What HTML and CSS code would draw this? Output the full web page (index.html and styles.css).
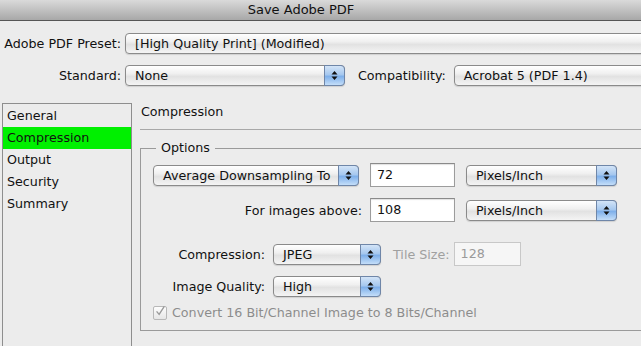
FILE: index.html
```html
<!DOCTYPE html>
<html lang="en">
<head>
    <meta charset="UTF-8">
    <title>Save Adobe PDF</title>
    <link rel="stylesheet" href="styles.css">
</head>
<body>

<div class="window">
    <!-- Barra de título -->
    <div class="titlebar">Save Adobe PDF</div>

    <!-- Preset y estándar -->
    <div class="top-row preset-row">
        <span class="top-label">Adobe PDF Preset:</span>
        <div class="popup popup-open">[High Quality Print] (Modified)</div>
    </div>
    <div class="top-row standard-row">
        <span class="top-label">Standard:</span>
        <div class="popup popup-standard">None<span class="stepper"><svg width="7" height="11" viewBox="0 0 7 11"><path d="M3.5 1 L6.5 4.5 L0.5 4.5 Z M3.5 10 L6.5 6.5 L0.5 6.5 Z" fill="#111"/></svg></span></div>
        <span class="compat-label">Compatibility:</span>
        <div class="popup popup-open">Acrobat 5 (PDF 1.4)</div>
    </div>

    <div class="main">
        <!-- Lista de secciones -->
        <ul class="sidebar">
            <li>General</li>
            <li class="selected">Compression</li>
            <li>Output</li>
            <li>Security</li>
            <li>Summary</li>
        </ul>

        <div class="panel">
            <div class="panel-title">Compression</div>

            <fieldset class="group">
                <legend>Options</legend>

                <div class="opt-row row-sampling">
                    <div class="popup popup-sampling">Average Downsampling To<span class="stepper"><svg width="7" height="11" viewBox="0 0 7 11"><path d="M3.5 1 L6.5 4.5 L0.5 4.5 Z M3.5 10 L6.5 6.5 L0.5 6.5 Z" fill="#111"/></svg></span></div>
                    <div class="field">72</div>
                    <div class="popup popup-unit">Pixels/Inch<span class="stepper"><svg width="7" height="11" viewBox="0 0 7 11"><path d="M3.5 1 L6.5 4.5 L0.5 4.5 Z M3.5 10 L6.5 6.5 L0.5 6.5 Z" fill="#111"/></svg></span></div>
                </div>

                <div class="opt-row row-above">
                    <span class="opt-label label-above">For images above:</span>
                    <div class="field">108</div>
                    <div class="popup popup-unit">Pixels/Inch<span class="stepper"><svg width="7" height="11" viewBox="0 0 7 11"><path d="M3.5 1 L6.5 4.5 L0.5 4.5 Z M3.5 10 L6.5 6.5 L0.5 6.5 Z" fill="#111"/></svg></span></div>
                </div>

                <div class="opt-row row-compression">
                    <span class="opt-label label-short">Compression:</span>
                    <div class="popup popup-small">JPEG<span class="stepper"><svg width="7" height="11" viewBox="0 0 7 11"><path d="M3.5 1 L6.5 4.5 L0.5 4.5 Z M3.5 10 L6.5 6.5 L0.5 6.5 Z" fill="#111"/></svg></span></div>
                    <span class="tile-label">Tile Size:</span>
                    <div class="field field-disabled">128</div>
                </div>

                <div class="opt-row row-quality">
                    <span class="opt-label label-short">Image Quality:</span>
                    <div class="popup popup-small">High<span class="stepper"><svg width="7" height="11" viewBox="0 0 7 11"><path d="M3.5 1 L6.5 4.5 L0.5 4.5 Z M3.5 10 L6.5 6.5 L0.5 6.5 Z" fill="#111"/></svg></span></div>
                </div>

                <div class="opt-row row-convert">
                    <span class="checkbox"><svg width="14" height="14" viewBox="0 0 14 14"><path d="M3 7.5 L6 11 L12 1.5" fill="none" stroke="#9a9a9a" stroke-width="1.6"/></svg></span>
                    <span class="convert-text">Convert 16 Bit/Channel Image to 8 Bits/Channel</span>
                </div>
            </fieldset>
        </div>
    </div>
</div>

</body>
</html>
```

FILE: styles.css
```css
* {
    margin: 0;
    padding: 0;
    box-sizing: border-box;
}
body {
    font-family: 'DejaVu Sans', sans-serif;
    font-size: 12.7px;
    color: #111;
    background-color: #ececec;
}
.window {
    width: 641px;
    height: 346px;
    overflow: hidden;
    background-color: #ececec;
}
.titlebar {
    height: 21px;
    line-height: 20px;
    text-align: center;
    padding-right: 39px;
    background: linear-gradient(#dadada, #a8a8a8);
    border-bottom: 1px solid #565656;
    font-size: 13px;
}
.top-row {
    display: flex;
    align-items: center;
    white-space: nowrap;
}
.top-row > * {
    flex-shrink: 0;
}
.preset-row {
    margin-top: 12px;
}
.standard-row {
    margin-top: 11px;
}
.top-label {
    width: 121px;
    text-align: right;
    margin-right: 4px;
}
.compat-label {
    margin-left: 13px;
    margin-right: 8px;
}
/* Menús emergentes estilo Aqua */
.popup {
    position: relative;
    height: 21px;
    line-height: 19px;
    padding-left: 9px;
    border: 1px solid #8a8a8a;
    border-radius: 4px;
    background: linear-gradient(#ffffff, #f0f0f0 40%, #e2e2e2 55%, #f4f4f4);
    box-shadow: 0 1px 1px rgba(0, 0, 0, 0.12);
    white-space: nowrap;
    flex-shrink: 0;
}
.popup-open {
    width: 560px;
}
.popup-standard {
    width: 220px;
}
.stepper {
    position: absolute;
    top: -1px;
    right: -1px;
    bottom: -1px;
    width: 21px;
    display: flex;
    align-items: center;
    justify-content: center;
    border: 1px solid #6f86a8;
    border-radius: 0 4px 4px 0;
    background: linear-gradient(#d3e4f7, #a6c8ef 45%, #7fb0ea 55%, #c4def9);
}
.main {
    display: flex;
    margin-top: 17px;
    height: 260px;
}
.sidebar {
    list-style: none;
    width: 130px;
    margin-left: 2px;
    padding-top: 1px;
    border: 1px solid #8e8e8e;
    border-bottom: none;
    flex-shrink: 0;
}
.sidebar li {
    height: 22px;
    line-height: 22px;
    padding-left: 4px;
}
.sidebar .selected {
    background-color: #00f000;
}
.panel {
    margin-left: 8px;
    flex: 1;
}
.panel-title {
    padding: 1px 0 9px 1px;
    line-height: 16px;
    border-bottom: 1px solid #a8a8a8;
}
.group {
    margin-top: 10px;
    width: 560px;
    height: 191px;
    border: 1px solid #9a9a9a;
    padding: 0 0 0 12px;
}
.group legend {
    margin-left: 3px;
    padding: 0 5px;
    line-height: 16px;
}
.opt-row {
    display: flex;
    align-items: center;
    white-space: nowrap;
}
.opt-row > * {
    flex-shrink: 0;
}
.row-sampling {
    margin-top: 7px;
}
.row-above {
    margin-top: 11px;
}
.row-compression {
    margin-top: 20px;
}
.row-quality {
    margin-top: 10px;
}
.row-convert {
    margin-top: 8px;
    color: #8c8c8c;
}
.popup-sampling {
    width: 206px;
    margin-right: 11px;
}
.popup-unit {
    width: 151px;
    margin-left: 11px;
}
.popup-small {
    width: 108px;
}
.field {
    width: 85px;
    height: 24px;
    line-height: 22px;
    padding-left: 6px;
    border: 1px solid #9c9c9c;
    border-top-color: #8a8a8a;
    background-color: #fff;
    box-shadow: inset 0 1px 1px rgba(0, 0, 0, 0.12);
}
.field-disabled {
    width: 67px;
    color: #9a9a9a;
    border-color: #c8c8c8;
    box-shadow: none;
    background-color: #f6f6f6;
}
.opt-label {
    text-align: right;
    margin-right: 8px;
}
.label-above {
    width: 209px;
}
.label-short {
    width: 112px;
}
.tile-label {
    color: #a0a0a0;
    margin-left: 12px;
    margin-right: 4px;
}
.checkbox {
    width: 14px;
    height: 14px;
    margin-right: 5px;
    border: 1px solid #b8b8b8;
    border-radius: 2px;
    background: linear-gradient(#fdfdfd, #e6e6e6);
    display: flex;
}
.checkbox svg {
    margin: -3px 0 0 0;
}
```
